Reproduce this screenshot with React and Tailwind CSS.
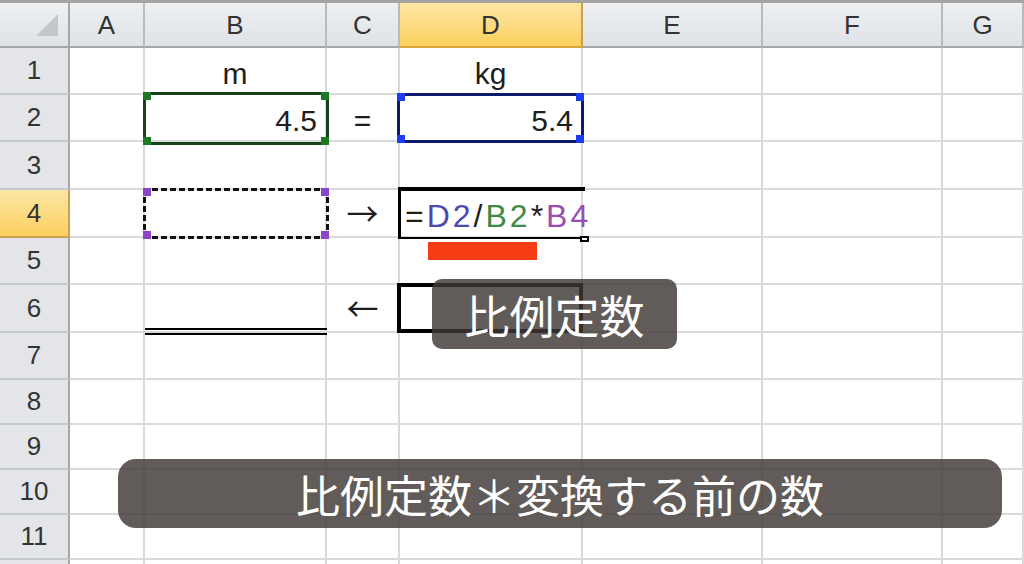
import React from "react";

const COLUMNS = ["A", "B", "C", "D", "E", "F", "G"];
const GRID = "grid grid-cols-[70px_75px_182px_73px_183px_180px_180px_1fr]";
const SHEET_FONT = "font-['Liberation_Sans',Arial,sans-serif]";
const CAPTION_FONT = "font-['Noto_Sans_CJK_JP','Noto_Sans',sans-serif]";

const ROWS = [
  { n: 1, h: "h-[47px]" },
  { n: 2, h: "h-[47px]" },
  { n: 3, h: "h-[48px]" },
  { n: 4, h: "h-[48px]" },
  { n: 5, h: "h-[47px]" },
  { n: 6, h: "h-[48px]" },
  { n: 7, h: "h-[47px]" },
  { n: 8, h: "h-[45px]" },
  { n: 9, h: "h-[45px]" },
  { n: 10, h: "h-[45px]" },
  { n: 11, h: "h-[45px]" },
  { n: null, h: "h-[45px]" },
];

// active cell D4, so its column and row headers are highlighted
const ACTIVE_COL = "D";
const ACTIVE_ROW = 4;

const Corners = ({ color }) => (
  <>
    <span className={`absolute -left-[3px] -top-[3px] h-[8px] w-[8px] ${color}`} />
    <span className={`absolute -right-[3px] -top-[3px] h-[8px] w-[8px] ${color}`} />
    <span className={`absolute -left-[3px] -bottom-[3px] h-[8px] w-[8px] ${color}`} />
    <span className={`absolute -right-[3px] -bottom-[3px] h-[8px] w-[8px] ${color}`} />
  </>
);

const CellText = ({ align = "center", children }) => (
  <div
    className={`flex h-full items-end pb-[4px] text-[30px] leading-none text-[#1e1e1e] ${
      align === "right" ? "justify-end pr-[8px]" : "justify-center"
    }`}
  >
    {children}
  </div>
);

const Arrow = ({ children }) => (
  <div className={`flex h-full items-center justify-center pb-[2px] text-[32px] leading-none text-[#1e1e1e] ${CAPTION_FONT}`}>
    {children}
  </div>
);

const renderCell = (col, row) => {
  switch (`${col}${row}`) {
    case "B1":
      return <CellText>m</CellText>;
    case "D1":
      return <CellText>kg</CellText>;
    case "B2":
      return (
        <>
          <CellText align="right">4.5</CellText>
          <div className="absolute -left-[2px] -right-[4px] -top-[3px] -bottom-[5px] z-[5] border-[3px] border-[#17431a]">
            <Corners color="bg-[#1d7a22]" />
          </div>
        </>
      );
    case "C2":
      return <CellText>=</CellText>;
    case "D2":
      return (
        <>
          <CellText align="right">5.4</CellText>
          <div className="absolute -left-[3px] -right-[3px] -top-[2px] -bottom-[3px] z-[5] border-[3px] border-[#0d1a6e]">
            <Corners color="bg-[#1c3cf2]" />
          </div>
        </>
      );
    case "B4":
      return (
        <div className="absolute -left-[2px] -right-[4px] -top-[2px] -bottom-[3px] z-[5] border-[3px] border-dashed border-[#111]">
          <Corners color="bg-[#8a46c6]" />
        </div>
      );
    case "C4":
      return <Arrow>→</Arrow>;
    case "D4":
      return (
        <>
          <div className="relative z-[6] flex h-full items-end whitespace-nowrap pb-[4px] pl-[5px] text-[32px] leading-none tracking-[3px] text-[#1e1e1e]">
            <span>=</span>
            <span className="text-[#4a4ab4]">D2</span>
            <span>/</span>
            <span className="text-[#3f8a46]">B2</span>
            <span>*</span>
            <span className="text-[#9550b0]">B4</span>
          </div>
          <div className="absolute -left-[2px] -right-[4px] -top-[3px] -bottom-[3px] z-[5] border-l-[3px] border-t-4 border-b-2 border-black">
            <span className="absolute -right-[4px] -bottom-[5px] h-[6px] w-[9px] border-2 border-black bg-white" />
          </div>
        </>
      );
    case "D5":
      return (
        <div className="pl-[28px] pt-[4px]">
          <div className="h-[18px] w-[109px] bg-[#f53c14]" />
        </div>
      );
    case "B6":
      return <div className="absolute left-0 -right-[2px] -bottom-[4px] z-[5] h-[7px] border-y-2 border-black" />;
    case "C6":
      return <Arrow>←</Arrow>;
    case "D6":
      return <div className="absolute -left-[3px] -right-[2px] -top-[2px] -bottom-[2px] z-[5] border-4 border-black" />;
    default:
      return null;
  }
};

const HeaderRow = () => (
  <div className={`${GRID} h-[48px] border-t-[3px] border-[#a4a4a4]`}>
    <div className="flex items-end justify-end border-b-2 border-r-2 border-[#a2a7ad] bg-gradient-to-b from-[#eef0f2] to-[#dfe2e6] p-[10px]">
      <svg width="22" height="22" viewBox="0 0 22 22">
        <polygon points="22,0 22,22 0,22" fill="#c4c6c9" />
      </svg>
    </div>
    {COLUMNS.map((c) =>
      c === ACTIVE_COL ? (
        <div
          key={c}
          className="flex items-center justify-center border-b-2 border-r-2 border-b-[#d9a63c] border-r-[#c9a04c] bg-gradient-to-b from-[#fde6a4] to-[#fbd05c] pt-[2px] text-[26px] text-[#333]"
        >
          {c}
        </div>
      ) : (
        <div
          key={c}
          className="flex items-center justify-center border-b-2 border-r-2 border-b-[#a2a7ad] border-r-[#b8bcc2] bg-gradient-to-b from-[#eef0f2] to-[#dfe2e6] pt-[2px] text-[26px] text-[#333]"
        >
          {c}
        </div>
      )
    )}
  </div>
);

const SheetRow = ({ n, h }) => (
  <div className={`${GRID} ${h}`}>
    {n === ACTIVE_ROW ? (
      <div className="flex items-center justify-center border-b-2 border-r-2 border-b-[#c9a04c] border-r-[#c9a04c] bg-gradient-to-b from-[#fde6a4] to-[#fbd05c] text-[26px] text-[#333]">
        {n}
      </div>
    ) : (
      <div className="flex items-center justify-center border-b-2 border-r-2 border-b-[#c5c9ce] border-r-[#a2a7ad] bg-[#e3e5e8] text-[26px] text-[#333]">
        {n}
      </div>
    )}
    {COLUMNS.map((c) => (
      <div key={c} className="relative border-b-2 border-r-2 border-[#dadada] bg-white">
        {renderCell(c, n)}
      </div>
    ))}
  </div>
);

export default function App() {
  return (
    <div className={`relative h-[564px] w-[1024px] overflow-hidden bg-white ${SHEET_FONT}`}>
      <HeaderRow />
      {ROWS.map((r, i) => (
        <SheetRow key={i} n={r.n} h={r.h} />
      ))}

      {/* caption bubbles over the sheet */}
      <div
        className={`absolute left-[432px] top-[279px] z-20 flex h-[70px] w-[245px] items-center justify-center rounded-[10px] bg-[rgba(62,56,52,0.82)] text-[45px] leading-none text-white ${CAPTION_FONT}`}
      >
        比例定数
      </div>
      <div
        className={`absolute left-[118px] top-[459px] z-20 flex h-[69px] w-[884px] items-center justify-center rounded-[18px] bg-[rgba(62,56,52,0.82)] text-[44px] leading-none text-white ${CAPTION_FONT}`}
      >
        比例定数＊変換する前の数
      </div>
    </div>
  );
}
